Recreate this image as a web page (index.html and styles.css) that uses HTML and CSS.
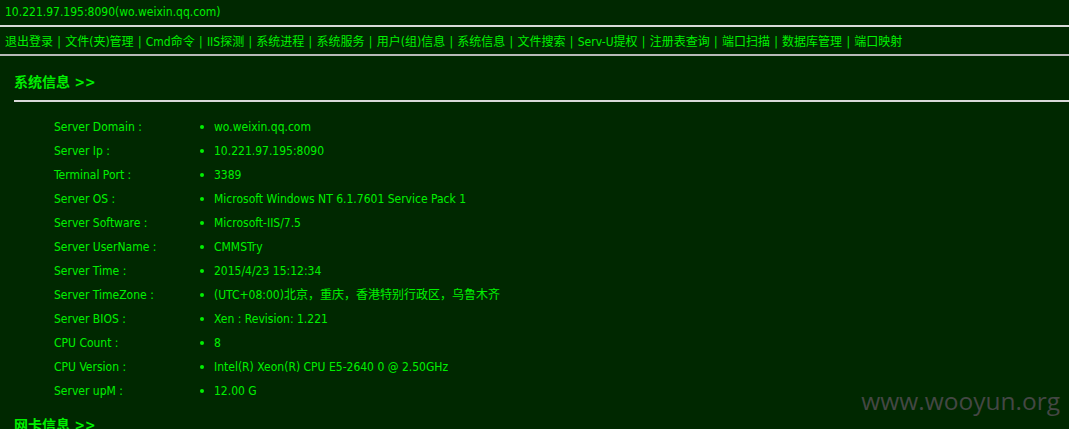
FILE: index.html
```html
<!DOCTYPE html>
<html>
<head>
<meta charset="utf-8">
<link rel="stylesheet" href="styles.css">
</head>
<body>
<div class="top">10.221.97.195:8090(wo.weixin.qq.com)</div>
<div class="nav">退出登录 | 文件(夹)管理 | Cmd命令 | IIS探测 | 系统进程 | 系统服务 | 用户(组)信息 | 系统信息 | 文件搜索 | Serv-U提权 | 注册表查询 | 端口扫描 | 数据库管理 | 端口映射</div>
<div class="section">
  <div class="title">系统信息 &gt;&gt;</div>
  <div class="rule"></div>
  <div class="rows">
    <div class="row"><span class="lbl">Server Domain :</span><span class="dot"></span><span class="val">wo.weixin.qq.com</span></div>
    <div class="row"><span class="lbl">Server Ip :</span><span class="dot"></span><span class="val">10.221.97.195:8090</span></div>
    <div class="row"><span class="lbl">Terminal Port :</span><span class="dot"></span><span class="val">3389</span></div>
    <div class="row"><span class="lbl">Server OS :</span><span class="dot"></span><span class="val">Microsoft Windows NT 6.1.7601 Service Pack 1</span></div>
    <div class="row"><span class="lbl">Server Software :</span><span class="dot"></span><span class="val">Microsoft-IIS/7.5</span></div>
    <div class="row"><span class="lbl">Server UserName :</span><span class="dot"></span><span class="val">CMMSTry</span></div>
    <div class="row"><span class="lbl">Server Time :</span><span class="dot"></span><span class="val">2015/4/23 15:12:34</span></div>
    <div class="row"><span class="lbl">Server TimeZone :</span><span class="dot"></span><span class="val">(UTC+08:00)北京，重庆，香港特别行政区，乌鲁木齐</span></div>
    <div class="row"><span class="lbl">Server BIOS :</span><span class="dot"></span><span class="val">Xen : Revision: 1.221</span></div>
    <div class="row"><span class="lbl">CPU Count :</span><span class="dot"></span><span class="val">8</span></div>
    <div class="row"><span class="lbl">CPU Version :</span><span class="dot"></span><span class="val">Intel(R) Xeon(R) CPU E5-2640 0 @ 2.50GHz</span></div>
    <div class="row"><span class="lbl">Server upM :</span><span class="dot"></span><span class="val">12.00 G</span></div>
  </div>
  <div class="title title2">网卡信息 &gt;&gt;</div>
</div>
<div class="mark">www.wooyun.org</div>
</body>
</html>
```
FILE: styles.css
```css
html, body {
  margin: 0;
  padding: 0;
  background: #002800;
  height: 100%;
  overflow: hidden;
}
body {
  font-family: "DejaVu Sans Condensed", "DejaVu Sans", "Noto Sans CJK SC", sans-serif;
  font-size: 12px;
  color: #00f000;
  position: relative;
}
.top {
  height: 25px;
  line-height: 25px;
  padding-left: 5px;
  border-bottom: 2px solid #d8d8d8;
}
.nav {
  height: 27px;
  line-height: 30px;
  padding-left: 5px;
  border-bottom: 2px solid #b8b8b8;
  white-space: nowrap;
  word-spacing: 0.85px;
}
.section {
  padding-left: 14px;
}
.title {
  font-weight: bold;
  font-size: 14px;
  padding-top: 16px;
  line-height: 20px;
}
.rule {
  margin-top: 8px;
  height: 2px;
  background: #d8d8d8;
}
.rows {
  padding-top: 13px;
  padding-left: 40px;
}
.row {
  display: flex;
  align-items: center;
  height: 24px;
  line-height: 24px;
}
.lbl {
  width: 146px;
}
.dot {
  width: 4px;
  height: 4px;
  border-radius: 50%;
  background: #00f000;
  margin-right: 10px;
}
.title2 {
  padding-top: 12px;
}
.mark {
  position: absolute;
  right: 9px;
  top: 384px;
  font-family: "Open Sans", sans-serif;
  font-size: 24.5px;
  color: #444744;
}
```
